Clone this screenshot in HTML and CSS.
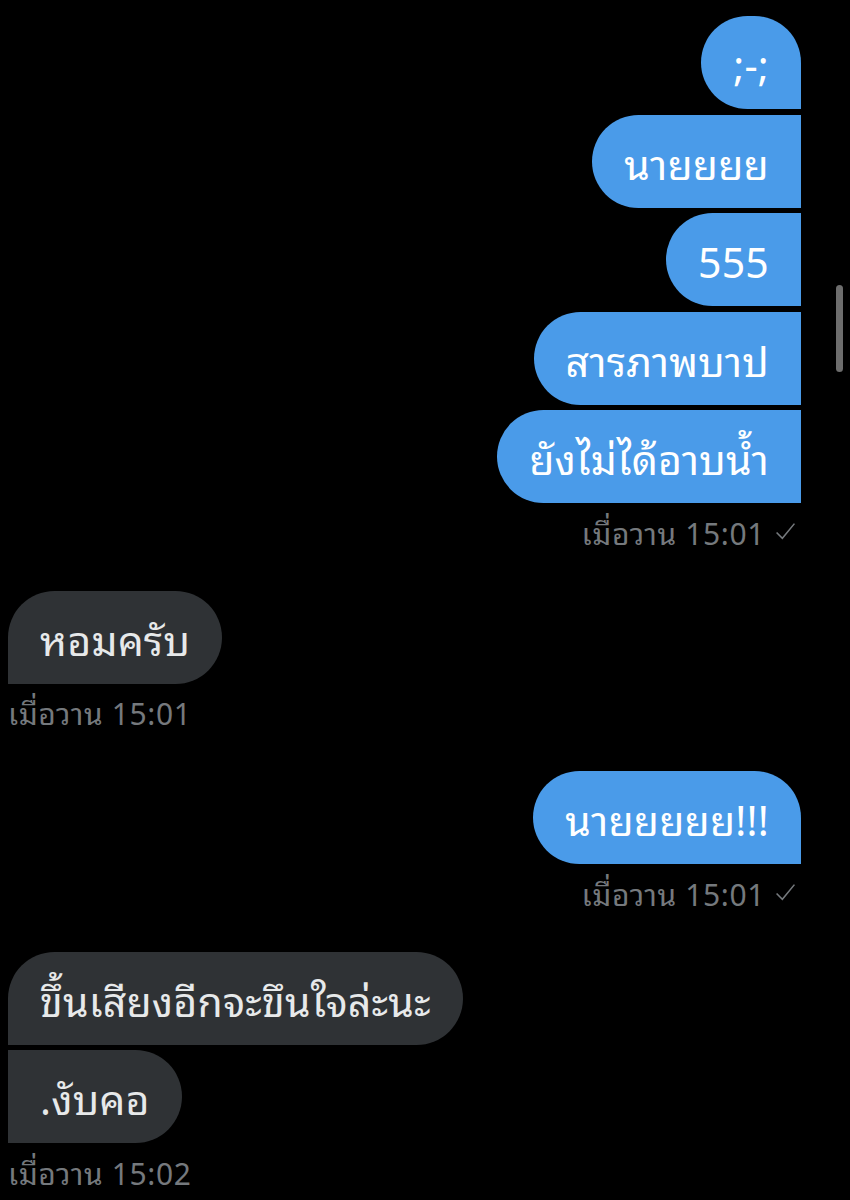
FILE: index.html
```html
<!DOCTYPE html>
<html lang="th">
<head>
<meta charset="utf-8">
<title>Chat</title>
<link rel="stylesheet" href="styles.css">
</head>
<body>
<div class="chat">
  <div class="group sent">
    <div class="bubble first">;-;</div>
    <div class="bubble mid">นายยยย</div>
    <div class="bubble mid">555</div>
    <div class="bubble mid">สารภาพบาป</div>
    <div class="bubble last">ยังไม่ได้อาบน้ำ</div>
    <div class="meta">เมื่อวาน 15:01 <svg class="check" viewBox="0 0 20 20"><path d="M1.5 11 L7 16.5 L18.5 2.5" fill="none" stroke="currentColor" stroke-width="1.5"/></svg></div>
  </div>
  <div class="group recv">
    <div class="bubble single">หอมครับ</div>
    <div class="meta">เมื่อวาน 15:01</div>
  </div>
  <div class="group sent">
    <div class="bubble single">นายยยยย!!!</div>
    <div class="meta">เมื่อวาน 15:01 <svg class="check" viewBox="0 0 20 20"><path d="M1.5 11 L7 16.5 L18.5 2.5" fill="none" stroke="currentColor" stroke-width="1.5"/></svg></div>
  </div>
  <div class="group recv">
    <div class="bubble first">ขึ้นเสียงอีกจะขึนใจล่ะนะ</div>
    <div class="bubble last">.งับคอ</div>
    <div class="meta">เมื่อวาน 15:02</div>
  </div>
</div>
<div class="scrollbar"></div>
</body>
</html>
```
FILE: styles.css
```css
html, body {
  margin: 0;
  padding: 0;
  background: #000;
}
body {
  width: 850px;
  height: 1200px;
  overflow: hidden;
  position: relative;
  font-family: "Noto Sans Thai Looped", "Noto Sans Thai", "Noto Sans Thai UI", "Loma", "Garuda", "Sarabun", "Noto Sans", "DejaVu Sans", sans-serif;
}
.chat {
  display: flex;
  flex-direction: column;
  gap: 41px;
  padding: 16px 49px 0 8px;
}
.group {
  display: flex;
  flex-direction: column;
  gap: 5.5px;
}
.group.sent { align-items: flex-end; }
.group.recv { align-items: flex-start; }
.bubble {
  height: 93px;
  box-sizing: border-box;
  padding: 0 32px;
  display: flex;
  align-items: center;
  font-size: 41px;
  letter-spacing: 0.2px;
  border-radius: 47px;
}
.sent .bubble {
  background: #4a9be9;
  color: #fff;
}
.recv .bubble {
  background: #2f3235;
  color: #e7e9ea;
}
.sent .bubble.first { border-bottom-right-radius: 0; }
.sent .bubble.mid { border-top-right-radius: 0; border-bottom-right-radius: 0; }
.sent .bubble.last { border-top-right-radius: 0; border-bottom-right-radius: 0; }
.sent .bubble.single { border-bottom-right-radius: 0; }
.recv .bubble.first { border-bottom-left-radius: 0; }
.recv .bubble.last { border-top-left-radius: 0; border-bottom-left-radius: 0; }
.recv .bubble.single { border-bottom-left-radius: 0; }
.meta {
  margin-top: 5px;
  height: 36px;
  line-height: 36px;
  font-size: 30px;
  letter-spacing: 0.6px;
  color: #75797d;
  display: flex;
  align-items: center;
  gap: 10px;
}
.sent .meta { margin-right: 5px; }
.check {
  width: 21px;
  height: 21px;
}
.scrollbar {
  position: absolute;
  left: 836px;
  top: 285px;
  width: 7px;
  height: 87px;
  border-radius: 4px;
  background: #6d6d6d;
}
```
